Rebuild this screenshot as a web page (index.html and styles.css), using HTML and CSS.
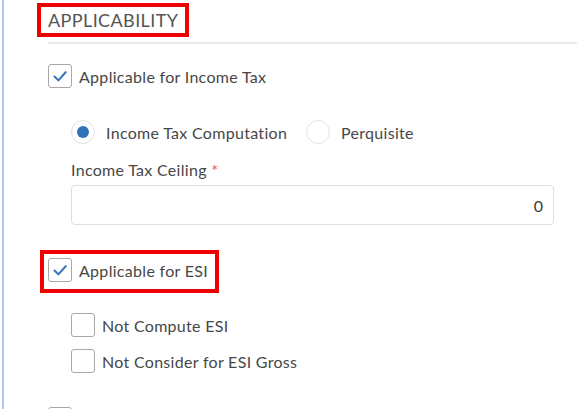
FILE: index.html
```html
<!DOCTYPE html>
<html>
<head>
<meta charset="utf-8">
<link rel="stylesheet" href="styles.css">
</head>
<body>
<div class="frame">
  <div class="title-box"><span class="title">APPLICABILITY</span></div>
  <div class="rule"></div>

  <label class="check-row main-row">
    <span class="box checked"><svg viewBox="0 0 24 24" width="24" height="24"><path d="M6 12.5 L10.3 16.8 L18.3 7.8" fill="none" stroke="#2f74b8" stroke-width="2.2" stroke-linecap="round" stroke-linejoin="round"/></svg></span>
    <span class="label">Applicable for Income Tax</span>
  </label>

  <div class="radios">
    <label class="radio-opt first"><span class="radio on"><span class="dot"></span></span><span class="label">Income Tax Computation</span></label>
    <label class="radio-opt"><span class="radio"></span><span class="label">Perquisite</span></label>
  </div>

  <div class="field">
    <div class="field-label">Income Tax Ceiling <span class="req">*</span></div>
    <div class="input">0</div>
  </div>

  <div class="esi-box">
    <label class="check-row">
      <span class="box checked"><svg viewBox="0 0 24 24" width="24" height="24"><path d="M6 12.5 L10.3 16.8 L18.3 7.8" fill="none" stroke="#2f74b8" stroke-width="2.2" stroke-linecap="round" stroke-linejoin="round"/></svg></span>
      <span class="label">Applicable for ESI</span>
    </label>
  </div>

  <div class="sub-list">
    <label class="check-row"><span class="box"></span><span class="label">Not Compute ESI</span></label>
    <label class="check-row"><span class="box"></span><span class="label">Not Consider for ESI Gross</span></label>
  </div>

  <label class="check-row last-row"><span class="box"></span></label>
</div>
</body>
</html>
```
FILE: styles.css
```css
html, body {
  margin: 0;
  padding: 0;
  background: #ffffff;
  overflow: hidden;
}
body {
  font-family: "Lato", "Noto Sans", sans-serif;
  color: #474747;
}
.frame {
  margin-left: 2px;
  border-left: 2px solid #a9c8f4;
  height: 409px;
  overflow: hidden;
  padding: 3px 6px 0 44px;
  box-sizing: border-box;
}
.title-box {
  display: inline-block;
  margin-left: -11px;
  border: 4px solid #ee0000;
  padding: 2px 7px 2px 7px;
  height: 34px;
  box-sizing: border-box;
}
.title {
  font-size: 18px;
  line-height: 22px;
  color: #545454;
  letter-spacing: 0.4px;
}
.rule {
  margin-top: 5px;
  border-top: 2px solid #e8e8e8;
}
.check-row {
  display: flex;
  align-items: center;
  gap: 7px;
  font-size: 16px;
  letter-spacing: 0.3px;
}
.main-row {
  margin-top: 20px;
}
.box {
  width: 24px;
  height: 24px;
  box-sizing: border-box;
  border: 1px solid #a8a8a8;
  border-radius: 3px;
  display: flex;
  align-items: center;
  justify-content: center;
  flex: none;
}
.box svg {
  display: block;
}
.radios {
  display: flex;
  margin-top: 32px;
  padding-left: 23px;
}
.radio-opt {
  display: flex;
  align-items: center;
  gap: 11px;
  font-size: 16px;
  letter-spacing: 0.3px;
}
.radio-opt.first {
  width: 235px;
}
.radio {
  width: 24px;
  height: 24px;
  box-sizing: border-box;
  border: 1px solid #e2e2e2;
  border-radius: 50%;
  display: flex;
  align-items: center;
  justify-content: center;
  flex: none;
}
.dot {
  width: 12px;
  height: 12px;
  border-radius: 50%;
  background: #2f74b8;
}
.field {
  padding: 0 23px;
  margin-top: 16px;
}
.field-label {
  font-size: 16px;
  line-height: 20px;
  letter-spacing: 0.3px;
}
.req {
  color: #d9534f;
}
.input {
  margin-top: 5px;
  height: 40px;
  box-sizing: border-box;
  border: 1px solid #dedede;
  border-radius: 4px;
  display: flex;
  align-items: center;
  justify-content: flex-end;
  padding-right: 10px;
  font-size: 16px;
  color: #3a3a3a;
}
.esi-box {
  margin-top: 25px;
  margin-left: -8px;
  width: 179px;
  height: 43px;
  box-sizing: border-box;
  border: 4px solid #ee0000;
  padding: 4px 4px 0 4px;
}
.sub-list {
  margin-top: 20px;
  padding-left: 23px;
  display: flex;
  flex-direction: column;
  gap: 12px;
}
.last-row {
  margin-top: 34px;
}
```
